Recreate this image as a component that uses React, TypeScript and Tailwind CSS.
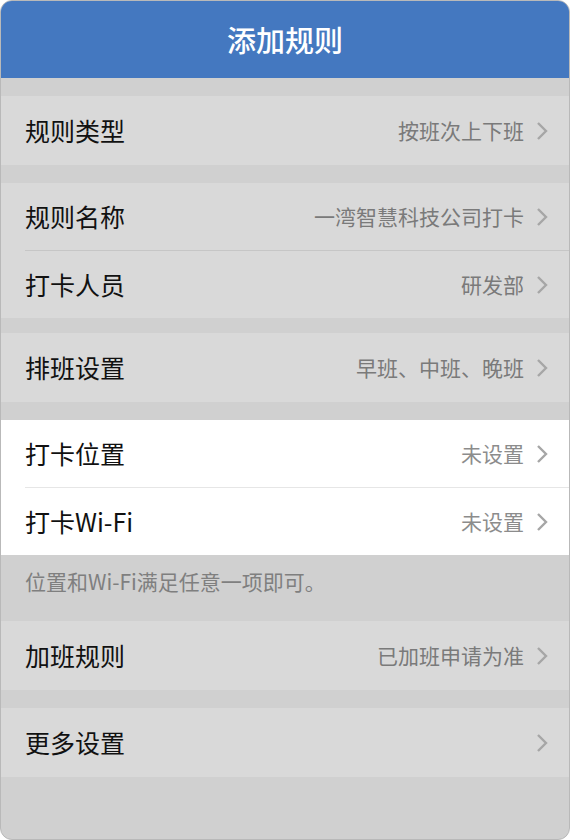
import React from 'react';

const font = { fontFamily: '"Noto Sans CJK SC", "Noto Sans", sans-serif' };

const Chevron: React.FC = () => (
    <svg width="12" height="20" viewBox="0 0 12 20" className="ml-[12px] shrink-0">
        <path d="M2 2 L10 10 L2 18" fill="none" stroke="#a6a6a6" strokeWidth="2.4" />
    </svg>
);

interface RowProps {
    label: string;
    value?: string;
    height: string;
    divider?: boolean;
    light?: boolean;
}

const Row: React.FC<RowProps> = ({ label, value, height, divider, light }) => (
    <div className={`flex items-center pl-[24px] ${height} ${light ? 'bg-white' : 'bg-[#d9d9d9]'}`}>
        <div
            className={`flex items-center h-full flex-1 pr-[21px] ${divider ? (light ? 'border-t border-[#e6e6e6]' : 'border-t border-[#c6c6c6]') : ''}`}
        >
            <span className="text-[25px] text-[#111] flex-1 leading-none">{label}</span>
            {value && <span className={`text-[21px] leading-none ${light ? 'text-[#8c8c8c]' : 'text-[#7a7a7a]'}`}>{value}</span>}
            <Chevron />
        </div>
    </div>
);

export default function App() {
    return (
        <div className="w-[570px] h-[840px] overflow-hidden" style={font}>
            <div className="h-full rounded-[12px] border border-[#b9b9b9] bg-[#d0d0d0] overflow-hidden flex flex-col">
                <div className="h-[77px] shrink-0 bg-[#4478c0] flex items-center justify-center">
                    <span className="text-white text-[29px] font-medium">添加规则</span>
                </div>

                <div className="mt-[18px]">
                    <Row label="规则类型" value="按班次上下班" height="h-[69px]" />
                </div>

                <div className="mt-[18px]">
                    <Row label="规则名称" value="一湾智慧科技公司打卡" height="h-[67px]" />
                    <Row label="打卡人员" value="研发部" height="h-[68px]" divider />
                </div>

                <div className="mt-[15px]">
                    <Row label="排班设置" value="早班、中班、晚班" height="h-[69px]" />
                </div>

                <div className="mt-[18px]">
                    <Row label="打卡位置" value="未设置" height="h-[67px]" light />
                    <Row label="打卡Wi-Fi" value="未设置" height="h-[68px]" divider light />
                </div>

                <div className="h-[66px] pl-[24px] pt-[11px]">
                    <span className="text-[21px] text-[#7f7f7f]">位置和Wi-Fi满足任意一项即可。</span>
                </div>

                <div>
                    <Row label="加班规则" value="已加班申请为准" height="h-[69px]" />
                </div>

                <div className="mt-[18px]">
                    <Row label="更多设置" height="h-[69px]" />
                </div>
            </div>
        </div>
    );
}
